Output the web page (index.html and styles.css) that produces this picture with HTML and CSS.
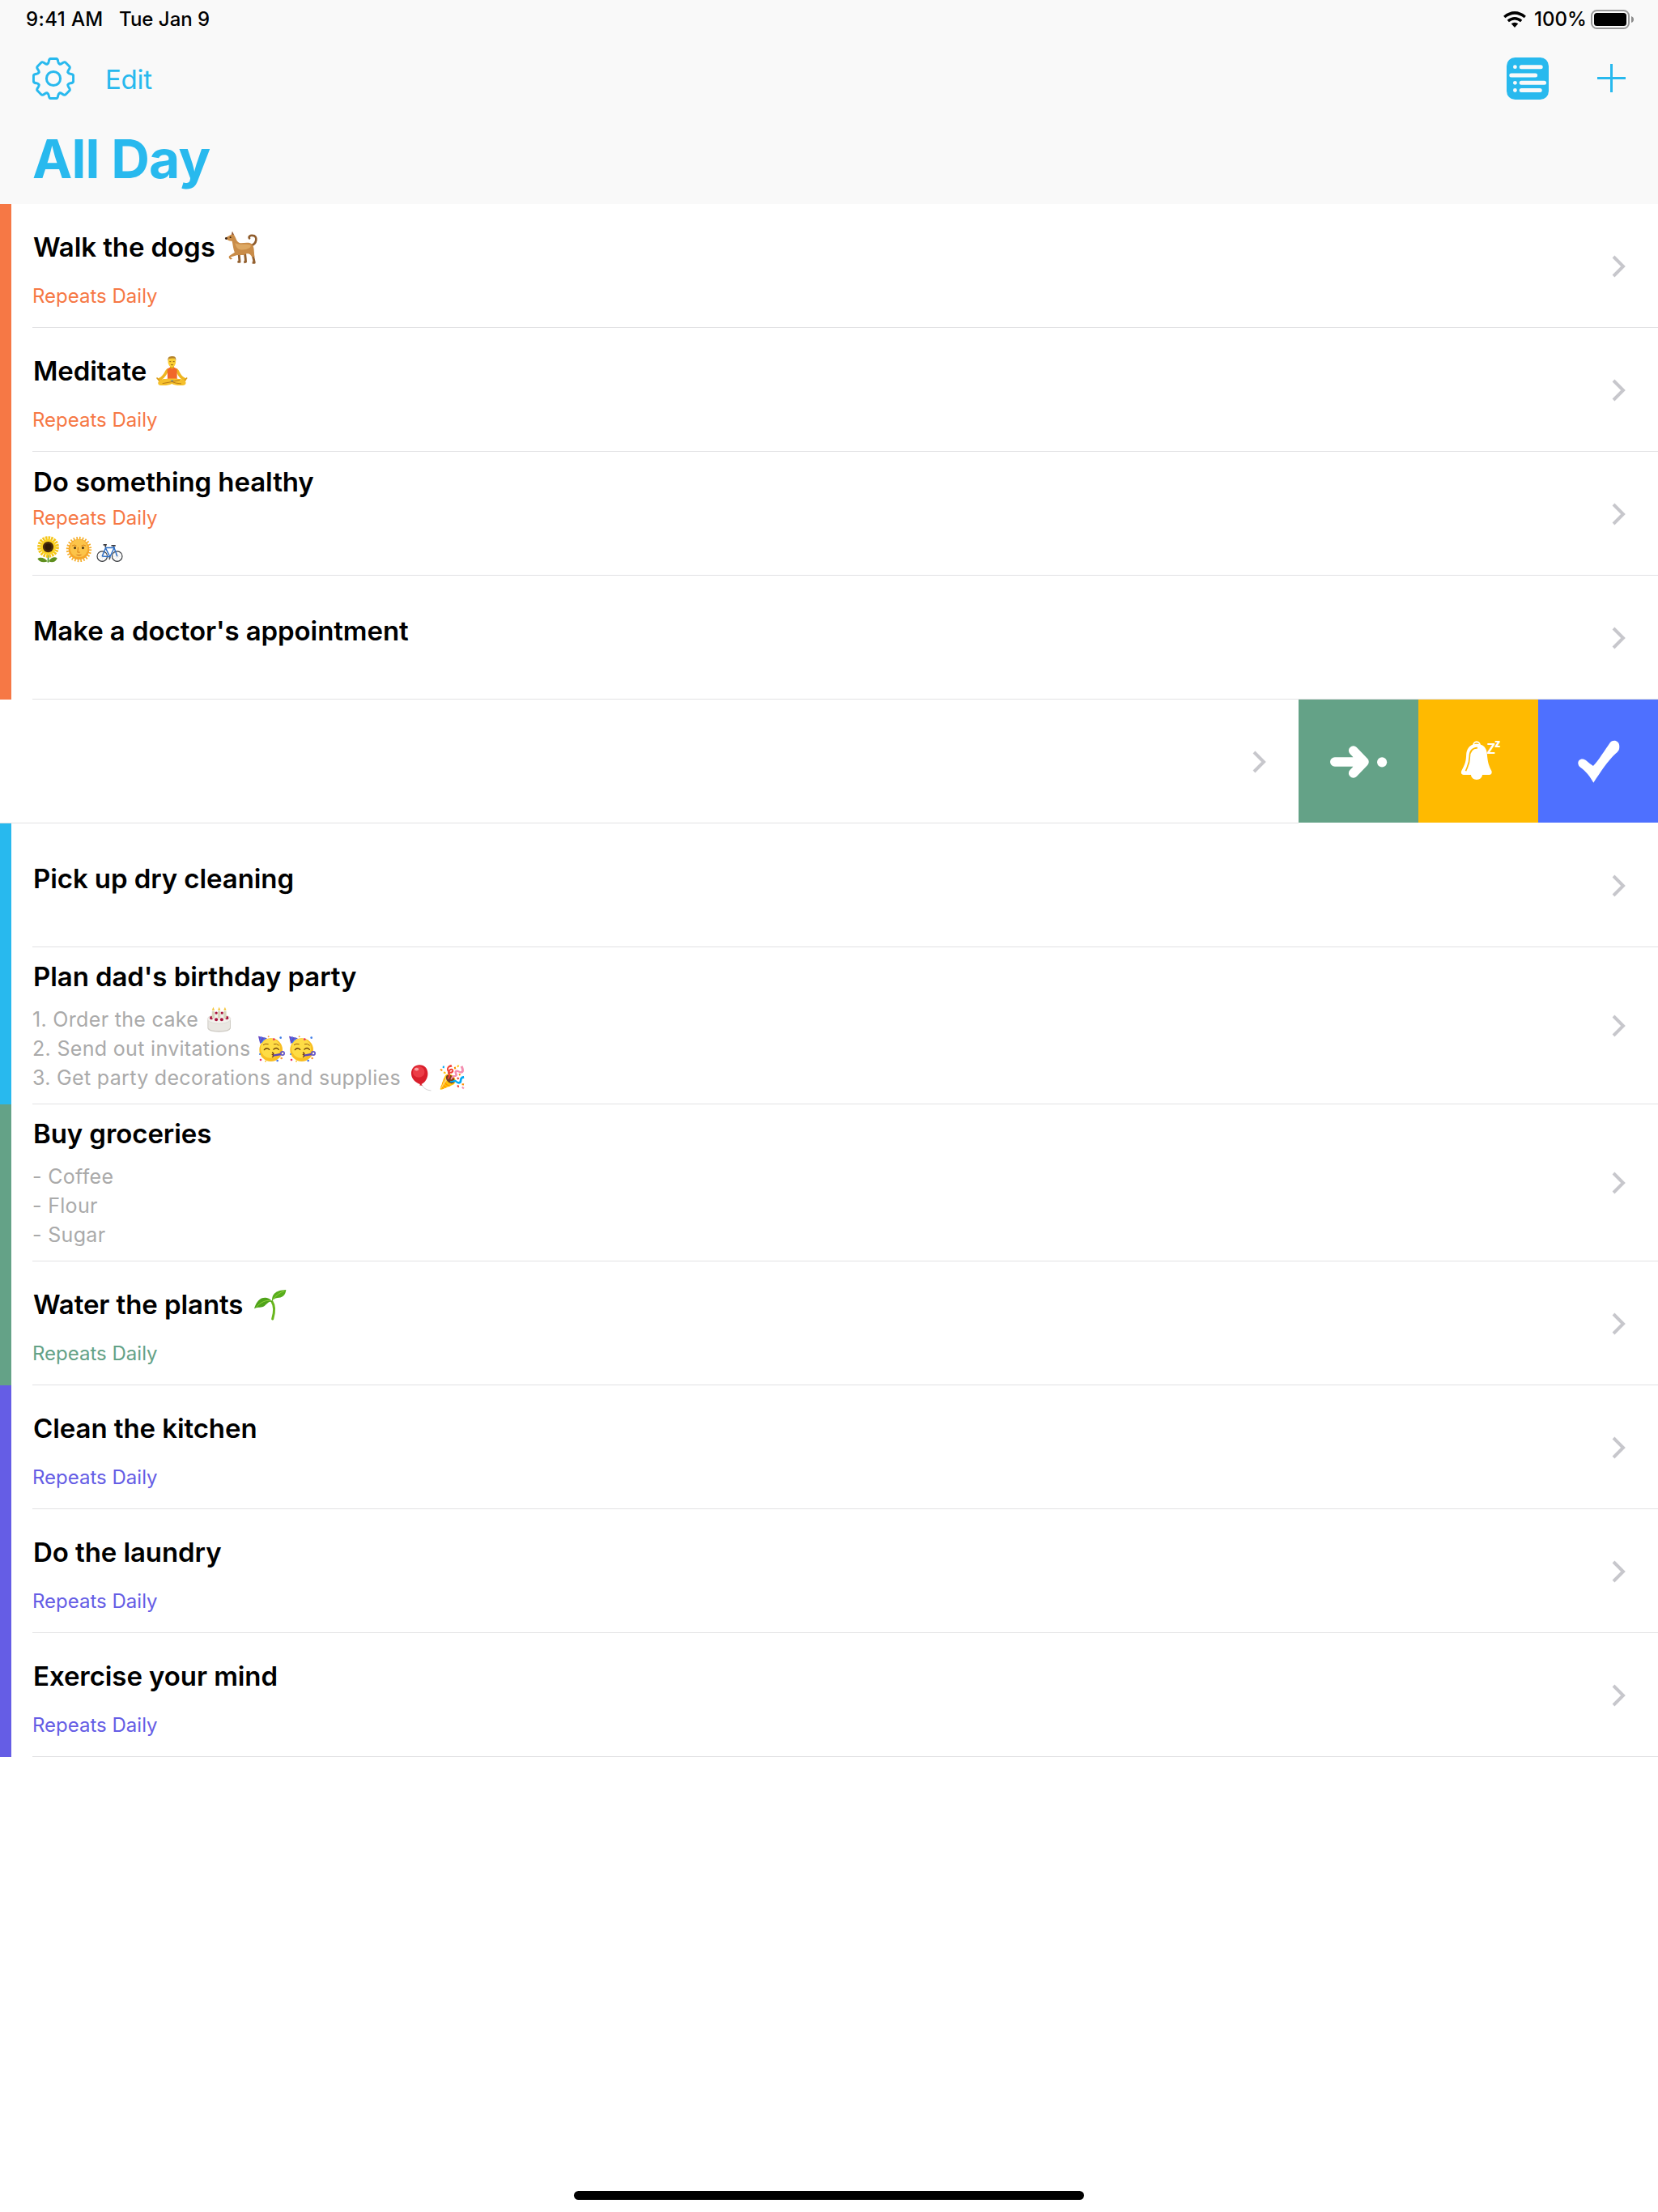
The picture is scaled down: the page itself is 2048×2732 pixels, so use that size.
FILE: index.html
```html
<!DOCTYPE html>
<html lang="en">
<head>
<meta charset="utf-8">
<title>All Day</title>
<link rel="stylesheet" href="styles.css">
</head>
<body>

<!-- Shared symbols -->
<svg class="defs" aria-hidden="true">
  <symbol id="chevron" viewBox="0 0 17 28"><path d="M2 2 L14 14 L2 26" fill="none" stroke="#c7c7cc" stroke-width="4"/></symbol>
  <symbol id="party" viewBox="0 0 99 99">
    <circle cx="47" cy="53" r="43" fill="#f9bf22"/>
    <circle cx="45" cy="47" r="36" fill="#fedc45"/>
    <path d="M0 2 L33 10 Q20 16 7 31 Z" fill="#6a48c4"/>
    <path d="M5 18 L14 5 M11 27 L25 8" stroke="#3f7de8" stroke-width="4"/>
    <path d="M18 35 Q26 28 38 32 M57 32 Q68 28 77 37" fill="none" stroke="#9a5f10" stroke-width="3"/>
    <path d="M22 53 Q31 42 41 52 M57 51 Q67 42 76 52" fill="none" stroke="#6b3d0a" stroke-width="4" stroke-linecap="round"/>
    <path d="M51 63 Q61 66 53 71 Q62 75 51 80" fill="none" stroke="#6b3410" stroke-width="4"/>
    <path d="M56 74 L84 69" stroke="#5a45b8" stroke-width="7"/>
    <circle cx="90" cy="66" r="6.500" fill="none" stroke="#6556c8" stroke-width="5"/>
    <circle cx="58" cy="14" r="4" fill="#e8356b"/><circle cx="83" cy="8" r="4" fill="#3f7de8"/>
    <circle cx="38" cy="4" r="3" fill="#f7a43a"/><circle cx="6" cy="69" r="3" fill="#3f7de8"/>
    <circle cx="9" cy="90" r="4" fill="#e8356b"/><circle cx="71" cy="93" r="4" fill="#4a74e0"/>
    <circle cx="86" cy="84" r="4" fill="#f79a3a"/><circle cx="27" cy="95" r="3" fill="#f9c93a"/>
  </symbol>
  <path id="tooth" d="M-7.460 -18.020 C-6.300 -18.500 -6 -19.500 -5.800 -20.700 C-5.500 -22.800 -5.400 -24.600 -3.300 -24.600 H3.300 C5.400 -24.600 5.500 -22.800 5.800 -20.700 C6 -19.500 6.300 -18.500 7.460 -18.020"/>
</svg>

<header class="header">
  <div class="status">
    <span class="status-time">9:41 AM</span>
    <span class="status-date">Tue Jan 9</span>
    <span class="spacer"></span>
    <svg class="wifi" viewBox="0 0 28 20"><g fill="none" stroke="#000" stroke-width="3.500"><path d="M1.200 7 Q14 -3.200 26.800 7"/><path d="M5.800 12 Q14 5.400 22.200 12"/></g><path d="M9.700 15.300 Q14 12.200 18.300 15.300 L14 20 Z"/></svg>
    <span class="status-percent">100%</span>
    <svg class="battery" viewBox="0 0 53 24"><rect x="1" y="1" width="46" height="22" rx="6.500" fill="none" stroke="#999" stroke-width="2"/><rect x="4" y="4" width="40" height="16" rx="3.500"/><path d="M50 8 Q53 9 53 12 Q53 15 50 16 Z" fill="#8c8c8c"/></svg>
  </div>
  <nav class="nav">
    <svg class="gear" viewBox="-26 -26 52 52"><g fill="none" stroke="#28b9ee" stroke-width="3" stroke-linecap="round"><use href="#tooth"/><use href="#tooth" transform="rotate(45)"/><use href="#tooth" transform="rotate(90)"/><use href="#tooth" transform="rotate(135)"/><use href="#tooth" transform="rotate(180)"/><use href="#tooth" transform="rotate(225)"/><use href="#tooth" transform="rotate(270)"/><use href="#tooth" transform="rotate(315)"/><circle r="8.600"/></g></svg>
    <span class="edit">Edit</span>
    <span class="spacer"></span>
    <svg class="list-icon" viewBox="0 0 52 52"><rect width="52" height="52" rx="10.500" fill="#28b9ee"/><g fill="#f9f9f9"><circle cx="10.400" cy="11.700" r="2.400"/><rect x="15.700" y="9.200" width="29" height="5" rx="2.500"/><rect x="3.300" y="19.600" width="34.800" height="5" rx="2.500"/><circle cx="10.400" cy="31.300" r="2.400"/><rect x="15.700" y="28.700" width="33.300" height="5" rx="2.500"/><circle cx="10.400" cy="40.500" r="2.400"/><rect x="15.700" y="38" width="28" height="5" rx="2.500"/></g></svg>
    <svg class="plus" viewBox="0 0 35 35"><path d="M0 17.500 H35 M17.500 0 V35" stroke="#28b9ee" stroke-width="3"/></svg>
  </nav>
  <h1 class="title">All Day</h1>
</header>

<main>
  <section class="group orange">
    <article class="task">
      <div class="body">
        <h2 class="name">Walk the dogs
          <svg class="emoji" role="img" aria-label="dog" viewBox="0 0 123 126">
            <path d="M98 56 C124 52 126 18 106 18 C96 17 90 22 94 29" fill="none" stroke="#8f5c2c" stroke-width="8" stroke-linecap="round"/>
            <path d="M106 82 L108 98 L113 121 L105 121 M77 86 L79 104 L80 118 L73 119 M54 86 L57 118 L49 118" fill="none" stroke="#93602f" stroke-width="9" stroke-linejoin="round"/>
            <path d="M4 26 L19 18 L26 14 L29 2 L36 16 C45 30 44 42 60 47 C80 46 98 42 106 54 C114 68 110 82 114 98 L104 100 C98 88 90 84 80 88 C70 94 60 92 48 92 L28 98 L22 101 L30 107 L22 109 C14 104 14 98 20 94 L38 82 C32 70 32 54 28 39 C20 40 8 36 4 26 Z" fill="#c98c48"/>
            <path d="M40 46 C52 56 84 48 98 54 C104 64 84 74 62 72 C48 70 42 60 40 46 Z" fill="#dda863"/>
            <path d="M27 14 L29 3 L35 15 Z" fill="#8a5645"/><circle cx="22" cy="25" r="3" fill="#33200f"/><circle cx="6" cy="29" r="4.500" fill="#3a2516"/>
          </svg>
        </h2>
        <p class="repeat">Repeats Daily</p>
      </div>
      <svg class="chevron"><use href="#chevron"/></svg>
    </article>
    <article class="task">
      <div class="body">
        <h2 class="name">Meditate
          <svg class="emoji" role="img" aria-label="man in lotus position" viewBox="-2 -5 123 123">
            <path d="M44 52 C34 60 36 76 12 87 M76 52 C86 60 82 76 107 87" fill="none" stroke="#eeb622" stroke-width="11" stroke-linecap="round"/>
            <path d="M4 82 L12 91 M114 82 L106 91" stroke="#d99b1c" stroke-width="5" stroke-linecap="round"/>
            <path d="M52 34 H67 V48 H52 Z" fill="#e2a41b"/>
            <path d="M42 48 L51 42 Q59 52 68 42 L78 48 V88 Q60 96 43 88 Z" fill="#f1682a"/>
            <path d="M18 88 C32 82 88 82 102 88 C116 96 112 110 98 109 C80 110 68 108 59 103 C48 108 38 110 20 109 C4 110 4 94 18 88 Z" fill="#f5c02c"/>
            <path d="M24 102 Q60 96 88 89 M94 103 Q70 101 60 96" fill="none" stroke="#b97c16" stroke-width="3"/>
            <path d="M53 90 H66 L60 95 Z" fill="#3b78bb"/>
            <ellipse cx="59" cy="22" rx="14.500" ry="19" fill="#fbcf35"/>
            <path d="M44 18 C43 2 52 1 60 1 C70 1 75 4 74 18 L70 9 Q58 7 48 10 Z" fill="#b4832b"/>
            <path d="M50 21 H56 M63 21 H69 M55 32 Q60 35 64 32" stroke="#7c4a12" stroke-width="2.500" fill="none"/>
          </svg>
        </h2>
        <p class="repeat">Repeats Daily</p>
      </div>
      <svg class="chevron"><use href="#chevron"/></svg>
    </article>
    <article class="task compact">
      <div class="body">
        <h2 class="name">Do something healthy</h2>
        <p class="repeat">Repeats Daily</p>
        <p class="note icons">
          <svg class="emoji" role="img" aria-label="sunflower" viewBox="-50 -41 100 100">
            <path d="M0 30 V58" stroke="#4f9a22" stroke-width="5"/>
            <path d="M-2 54 C-12 40 -30 36 -40 44 C-34 56 -18 60 -2 54 Z M2 54 C10 38 26 36 34 42 C28 56 16 60 2 54 Z" fill="#5f8f1e"/>
            <circle r="32" fill="none" stroke="#f5c518" stroke-width="17" stroke-dasharray="7 3"/>
            <circle r="29" fill="#fbd323"/>
            <circle r="20" fill="#4a2c0c"/><circle r="12" fill="#2e1b08"/>
          </svg>
          <svg class="emoji" role="img" aria-label="sun with face" viewBox="-50 -50 100 100">
            <circle r="42" fill="none" stroke="#f5ae29" stroke-width="11" stroke-dasharray="5 6"/>
            <circle r="39" fill="#f6a62a"/><circle cy="-4" r="33" fill="#fcc449"/>
            <path d="M-26 -13 Q-17 -20 -9 -13 M9 -13 Q17 -20 26 -13 M-3 -8 L-5 11 H4" fill="none" stroke="#d98018" stroke-width="3"/>
            <circle cx="-15" cy="-5" r="4.500" fill="#4a3414"/><circle cx="15" cy="-5" r="4.500" fill="#4a3414"/>
            <path d="M-12 19 Q0 30 12 19 Q0 22 -12 19Z" fill="#cf7220"/>
          </svg>
          <svg class="emoji" role="img" aria-label="bicycle" viewBox="0 -28 100 100">
            <g fill="none"><g stroke="#b9bcc0" stroke-width="1"><path d="M5 48 H40 M22 30 V66 M10 35 L35 61 M35 35 L10 61 M60 48 H96 M78 30 V66 M66 35 L91 61 M91 35 L66 61"/></g>
            <circle cx="22" cy="48" r="19" stroke="#393c40" stroke-width="3.500"/><circle cx="78" cy="48" r="19" stroke="#393c40" stroke-width="3.500"/>
            <path d="M22 48 L35 16 H67 L51 50 L35 18 M22 48 L51 50 M64 8 L78 48" stroke="#2f6fc4" stroke-width="4.500"/>
            <path d="M26 5 H36 L33 14 M56 8 H72" stroke="#3c3c40" stroke-width="5"/><path d="M51 50 L49 60" stroke="#55585c" stroke-width="5"/></g>
          </svg>
        </p>
      </div>
      <svg class="chevron"><use href="#chevron"/></svg>
    </article>
    <article class="task single">
      <div class="body"><h2 class="name">Make a doctor's appointment</h2></div>
      <svg class="chevron"><use href="#chevron"/></svg>
    </article>
  </section>

  <section class="swiped">
    <div class="swiped-row"><svg class="chevron"><use href="#chevron"/></svg></div>
    <div class="action move"><svg viewBox="249 42 440 456" preserveAspectRatio="none"><path d="M382 273 H480 M450 231 L490 273 L450 315" fill="none" stroke="#fff" stroke-width="34" stroke-linecap="round" stroke-linejoin="round"/><path d="M450 231 L480 273 L450 315 Z" fill="#fff"/><ellipse cx="555.500" cy="274" rx="18" ry="18.500" fill="#fff"/></svg></div>
    <div class="action snooze"><svg viewBox="689 42 440 456" preserveAspectRatio="none">
      <path d="M891 212 A12 13 0 0 1 915 212" fill="none" stroke="#fff" stroke-width="6"/>
      <path d="M889 209 Q903 203 918 209 C932 213 940 225 941 242 C944 280 949 288 958 307 Q961 319 950 321 H924 A21 18 0 0 1 882 321 H855 Q843 319 847 307 C862 278 864 270 865 243 C867 225 876 213 889 209 Z" fill="#fff"/>
      <path d="M906 221 C884 222 877 236 877 256 C877 282 868 292 863 307" fill="none" stroke="#ffba00" stroke-width="5"/>
      <text class="z" x="940" y="243" font-size="68" textLength="32" lengthAdjust="spacingAndGlyphs">z</text><text class="z bold" x="970" y="219" font-size="44" textLength="20" lengthAdjust="spacingAndGlyphs">z</text>
    </svg></div>
    <div class="action done"><svg viewBox="1128 42 440 456" preserveAspectRatio="none"><path d="M1275 281 C1272 262 1292 257 1304 268 Q1318 281 1330 288 C1350 268 1372 230 1392 202 C1404 188 1425 195 1426 213 C1427 229 1423 233 1414 241 C1382 270 1358 310 1331 350 C1319 327 1302 306 1283 293 Q1276 288 1275 281 Z" fill="#fff"/></svg></div>
  </section>

  <section class="group blue">
    <article class="task single">
      <div class="body"><h2 class="name">Pick up dry cleaning</h2></div>
      <svg class="chevron"><use href="#chevron"/></svg>
    </article>
    <article class="task tall">
      <div class="body">
        <h2 class="name">Plan dad's birthday party</h2>
        <p class="note">1. Order the cake
          <svg class="emoji" role="img" aria-label="birthday cake" viewBox="-5 -2 98 98">
            <path d="M2 46 V78 Q5 92 44 92 Q84 92 87 78 V46 Z" fill="#cfccc5"/><path d="M5 48 H84 V76 Q80 88 44 88 Q9 88 5 76 Z" fill="#e9e7e2"/>
            <ellipse cx="44.500" cy="44" rx="42.500" ry="17" fill="#f3f1ed" stroke="#d2cfc8" stroke-width="1.500"/>
            <g fill="#a9123b"><circle cx="34" cy="22" r="5"/><circle cx="55" cy="22" r="5"/><circle cx="16" cy="40" r="6"/><circle cx="73" cy="40" r="6"/><circle cx="34" cy="46" r="6"/><circle cx="54" cy="46" r="6"/></g>
            <path d="M23 15 V42 M44.500 15 V42 M66 15 V42" stroke="#d9d5bd" stroke-width="10"/>
            <path d="M23 0 L28 12 H18 Z M44.500 0 L49.500 12 H39.500 Z M66 0 L71 12 H61 Z" fill="#f4c63d"/>
          </svg>
        </p>
        <p class="note">2. Send out invitations
          <svg class="emoji" role="img" aria-label="partying face"><use href="#party"/></svg>
          <svg class="emoji" role="img" aria-label="partying face"><use href="#party"/></svg>
        </p>
        <p class="note">3. Get party decorations and supplies
          <svg class="emoji" role="img" aria-label="balloon" viewBox="-12 -1 100 100">
            <path d="M38 72 C44 86 56 94 74 96" fill="none" stroke="#b8b8b8" stroke-width="2"/>
            <path d="M31 0 C50 0 62 14 62 32 C62 52 50 66 38 72 L42 77 L31 76 L33 72 C14 66 0 50 0 31 C0 13 13 0 31 0 Z" fill="#d91f2c"/>
            <ellipse cx="28" cy="26" rx="22" ry="21" fill="#ec3d47"/>
            <ellipse cx="20" cy="16" rx="8" ry="6" fill="#f9a1a3"/>
          </svg>
          <span class="emoji glyph">🎉</span>
        </p>
      </div>
      <svg class="chevron"><use href="#chevron"/></svg>
    </article>
  </section>

  <section class="group green">
    <article class="task tall">
      <div class="body">
        <h2 class="name">Buy groceries</h2>
        <p class="note">- Coffee</p>
        <p class="note">- Flour</p>
        <p class="note">- Sugar</p>
      </div>
      <svg class="chevron"><use href="#chevron"/></svg>
    </article>
    <article class="task">
      <div class="body">
        <h2 class="name">Water the plants
          <svg class="emoji seedling" role="img" aria-label="seedling" viewBox="0 -4 123 123">
            <path d="M66 46 C78 64 74 90 68 110" fill="none" stroke="#69b61d" stroke-width="9" stroke-linecap="round"/>
            <path d="M0 72 C8 44 22 30 42 31 C56 32 64 40 68 48 C54 42 50 52 38 62 C28 70 14 64 0 72 Z" fill="#4fa31a"/>
            <path d="M66 44 C66 20 76 4 118 2 C116 24 102 32 86 32 C76 34 70 38 66 44 Z" fill="#57ad1c"/>
            <path d="M8 66 C24 48 42 40 62 42 M70 38 C80 22 96 12 112 6" fill="none" stroke="#8fd23c" stroke-width="3"/>
          </svg>
        </h2>
        <p class="repeat">Repeats Daily</p>
      </div>
      <svg class="chevron"><use href="#chevron"/></svg>
    </article>
  </section>

  <section class="group purple">
    <article class="task">
      <div class="body"><h2 class="name">Clean the kitchen</h2><p class="repeat">Repeats Daily</p></div>
      <svg class="chevron"><use href="#chevron"/></svg>
    </article>
    <article class="task">
      <div class="body"><h2 class="name">Do the laundry</h2><p class="repeat">Repeats Daily</p></div>
      <svg class="chevron"><use href="#chevron"/></svg>
    </article>
    <article class="task">
      <div class="body"><h2 class="name">Exercise your mind</h2><p class="repeat">Repeats Daily</p></div>
      <svg class="chevron"><use href="#chevron"/></svg>
    </article>
  </section>
</main>

<footer class="footer"><div class="home-indicator"></div></footer>
</body>
</html>
```
FILE: styles.css
```css
* { box-sizing: border-box; margin: 0; padding: 0; }

body {
  display: flex;
  flex-direction: column;
  height: 2732px;
  background: #fff;
  color: #000;
  font-family: Inter, "Liberation Sans", sans-serif;
}

svg { display: block; flex: none; }
.defs { display: none; }
.spacer { flex: 1; }

/* Header */
.header { height: 252px; background: #f9f9f9; }

.status {
  display: flex;
  align-items: center;
  height: 48px;
  padding: 0 30px 0 32px;
  font-size: 24px;
  font-weight: 500;
  line-height: 28px;
}
.status-time { width: 115px; letter-spacing: 0.4px; }
.wifi { width: 28px; height: 20px; margin-right: 10px; }
.status-percent { width: 70px; }
.battery { width: 53px; height: 24px; }

.nav {
  display: flex;
  align-items: center;
  height: 98px;
  padding: 0 40px;
  color: #28b9ee;
}
.gear { width: 52px; height: 52px; }
.edit { margin-left: 38px; padding-top: 2px; font-size: 33px; letter-spacing: -0.3px; line-height: 40px; }
.list-icon { width: 52px; height: 52px; margin-right: 60px; }
.plus { width: 35px; height: 35px; margin-bottom: 1px; }

.title {
  padding-left: 40px;
  color: #28b9ee;
  font-size: 66px;
  font-weight: 700;
  letter-spacing: -0.85px;
  line-height: 100px;
}

/* Groups carry the coloured bar on the left */
.group { padding-left: 26px; border-left: 14px solid; }
.orange { border-color: #f67845; --accent: #f67845; }
.blue { border-color: #28b9ee; --accent: #28b9ee; }
.green { border-color: #64a287; --accent: #64a287; }
.purple { border-color: #655de5; --accent: #655de5; }

/* Task rows */
.task {
  display: flex;
  align-items: center;
  height: 153px;
  padding-right: 40px;
  border-bottom: 1px solid #e2e2e4;
}
.body { flex: 1; align-self: stretch; padding-top: 33px; }
.chevron { width: 17px; height: 28px; margin-top: 2px; }

.name {
  display: flex;
  align-items: center;
  gap: 11px;
  height: 40px;
  padding-left: 1px;
  font-size: 33px;
  font-weight: 600;
  letter-spacing: -0.08px;
  line-height: 40px;
}
.repeat {
  margin-top: 27px;
  color: var(--accent);
  font-size: 24px;
  line-height: 28px;
}
.note {
  display: flex;
  align-items: center;
  gap: 5px;
  height: 36px;
  color: #aaa;
  font-size: 25px;
  letter-spacing: 0.32px;
  line-height: 36px;
}

.compact .body { padding-top: 17px; }
.compact .repeat { margin-top: 11px; }
.icons { padding: 13px 0 0 3px; }
.single .body { padding-top: 48px; }
.tall { height: 194px; }
.tall .chevron { margin-top: 0; }
.tall .body { padding-top: 16px; }
.tall .name { margin-bottom: 15px; }

/* Emoji */
.emoji { width: 33px; height: 33px; }
.note .emoji:first-child { margin-left: 4px; }
.icons .emoji:first-child { margin-left: 0; }
.name .emoji { width: 41px; height: 41px; }
.name .seedling { margin-left: 3px; }
.glyph {
  display: flex;
  align-items: center;
  justify-content: center;
  font-family: "Noto Color Emoji", sans-serif;
  font-size: 28px;
  letter-spacing: 0;
  line-height: 1;
}

/* Swiped row and its actions */
.swiped { display: flex; height: 153px; }
.swiped-row {
  flex: 1;
  display: flex;
  align-items: center;
  justify-content: flex-end;
  padding-right: 40px;
  border-bottom: 1px solid #e2e2e4;
}
.action { width: 148px; height: 152px; }
.action svg { width: 148px; height: 152px; }
.move { background: #64a287; }
.snooze { background: #ffba00; }
.done { background: #4e70ff; }
.z { fill: #fff; font-family: "Open Sans", sans-serif; font-weight: 600; }
.bold { font-weight: 800; }

/* Home indicator */
.footer { margin-top: auto; display: flex; justify-content: center; padding-bottom: 15px; }
.home-indicator { width: 630px; height: 11px; border-radius: 6px; background: #000; }
```
